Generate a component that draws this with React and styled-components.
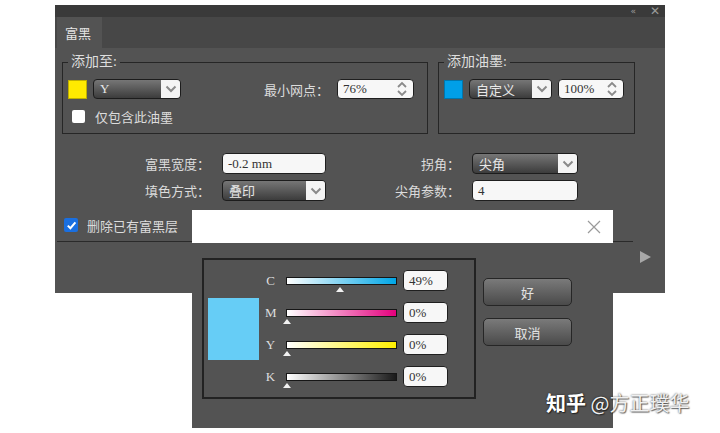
import React from 'react';
import styled, { createGlobalStyle } from 'styled-components';

const GlobalStyle = createGlobalStyle`
  body {
    margin: 0;
    background: #ffffff;
  }
`;

const UI_FONT = `"Liberation Serif", "Noto Sans CJK SC", serif`;

const Page = styled.div`
  position: relative;
  width: 720px;
  height: 433px;
  overflow: hidden;
  padding: 5px 0 0 55px;
  box-sizing: border-box;
  font-family: ${UI_FONT};
`;

const Panel = styled.div`
  width: 610px;
  height: 288px;
  background: #535353;
  display: flex;
  flex-direction: column;
`;

const TitleBar = styled.div`
  height: 12px;
  background: #3a3a3a;
  display: flex;
  justify-content: flex-end;
  align-items: center;
  gap: 14px;
  padding-right: 5px;
  color: #9a9a9a;
`;

const TitleGlyph = styled.span`
  font-family: "DejaVu Sans", sans-serif;
  font-size: ${({ size }) => size}px;
  line-height: 12px;
`;

const TabRow = styled.div`
  height: 31px;
  background: #474747;
  display: flex;
  padding-left: 2px;
`;

const Tab = styled.div`
  width: 45px;
  background: #535353;
  color: #e4e4e4;
  font-size: 13px;
  display: flex;
  align-items: center;
  padding-left: 8px;
  box-sizing: border-box;
`;

const Body = styled.div`
  flex: 1;
  display: flex;
  flex-direction: column;
  padding: 14px 0 0 7px;
`;

const GroupsRow = styled.div`
  display: flex;
  gap: 10px;
`;

const Group = styled.div`
  position: relative;
  width: ${({ width }) => width}px;
  height: 72px;
  box-sizing: border-box;
  border: 1px solid #262626;
  padding: 16px 0 0 5px;
`;

const Legend = styled.span`
  position: absolute;
  top: -9px;
  left: 5px;
  padding: 0 3px;
  background: #535353;
  color: #dedede;
  font-size: 14px;
  line-height: 16px;
`;

const Row = styled.div`
  display: flex;
  align-items: center;
  gap: ${({ gap }) => gap || 0}px;
  margin-top: ${({ top }) => top || 0}px;
`;

const Swatch = styled.div`
  width: 19px;
  height: 19px;
  box-sizing: border-box;
  border: 1px solid rgba(0, 0, 0, 0.25);
  background: ${({ color }) => color};
`;

const Select = styled.div`
  width: ${({ width }) => width}px;
  height: ${({ height }) => height || 20}px;
  box-sizing: border-box;
  border: 1px solid #1c1c1c;
  border-radius: 4px;
  background: linear-gradient(#767676, #3c3c3c);
  display: flex;
  overflow: hidden;
  margin-left: ${({ offset }) => offset || 0}px;
`;

const SelectText = styled.span`
  flex: 1;
  padding-left: 6px;
  color: #e8e8e8;
  font-size: 13px;
  display: flex;
  align-items: center;
`;

const Chevron = styled.span`
  width: 19px;
  background: #f4f4f4;
  display: flex;
  align-items: center;
  justify-content: center;
`;

const TextInput = styled.div`
  width: ${({ width }) => width}px;
  height: ${({ height }) => height || 20}px;
  box-sizing: border-box;
  border: 1px solid #1f1f1f;
  border-radius: 4px;
  background: #f7f7f7;
  display: flex;
  align-items: center;
  padding: 0 5px;
  color: #333333;
  font-size: 13px;
  margin-left: ${({ offset }) => offset || 0}px;
`;

const InputValue = styled.span`
  flex: 1;
`;

const Label = styled.span`
  color: #dcdcdc;
  font-size: 13px;
  margin-left: ${({ offset }) => offset || 0}px;
  text-align: ${({ align }) => align || 'left'};
  white-space: nowrap;
`;

const Check = styled.span`
  width: ${({ size }) => size}px;
  height: ${({ size }) => size}px;
  border-radius: 2px;
  background: ${({ checked }) => (checked ? '#1a6fe0' : '#ffffff')};
  display: flex;
  align-items: center;
  justify-content: center;
  margin-left: ${({ offset }) => offset || 0}px;
  flex-shrink: 0;
`;

const Form = styled.div`
  display: grid;
  grid-template-columns: 143px 104px 122px 106px;
  grid-auto-rows: 21px;
  column-gap: 12px;
  row-gap: 6px;
  margin: 19px 0 0 5px;
  align-items: center;
`;

const CheckRow = styled.div`
  width: 576px;
  height: 33px;
  box-sizing: border-box;
  margin: 8px 0 0 -5px;
  padding-left: 7px;
  border-bottom: 1px solid #2a2a2a;
  display: flex;
  align-items: center;
`;

const Footer = styled.div`
  flex: 1;
  display: flex;
  justify-content: flex-end;
  padding: 9px 14px 0 0;
`;

const Popup = styled.div`
  position: absolute;
  left: 192px;
  top: 210px;
  width: 421px;
  height: 218px;
  display: flex;
  flex-direction: column;
`;

const PopupHead = styled.div`
  height: 33px;
  background: #ffffff;
  display: flex;
  justify-content: flex-end;
  align-items: center;
  padding-right: 12px;
`;

const PopupBody = styled.div`
  flex: 1;
  background: #535353;
  display: flex;
  align-items: flex-start;
  gap: 7px;
  padding: 15px 0 0 10px;
`;

const ColorBox = styled.div`
  width: 274px;
  height: 141px;
  box-sizing: border-box;
  border: 2px solid #222222;
  display: flex;
  align-items: center;
  padding-left: 4px;
`;

const ColorSwatch = styled.div`
  width: 51px;
  height: 62px;
  background: #66cdf6;
`;

const Sliders = styled.div`
  display: flex;
  flex-direction: column;
  gap: 11px;
  margin-left: 6px;
`;

const SliderRow = styled.div`
  display: flex;
  align-items: center;
  height: 21px;
`;

const Channel = styled.span`
  width: 11px;
  text-align: center;
  color: #dedede;
  font-size: 13px;
`;

const Track = styled.div`
  position: relative;
  width: 111px;
  height: 8px;
  box-sizing: border-box;
  margin-left: 10px;
  border: 1px solid #161616;
  background: linear-gradient(to right, #ffffff, ${({ to }) => to});
`;

const Thumb = styled.span`
  position: absolute;
  top: 9px;
  width: 0;
  height: 0;
  margin-left: -4px;
  border-left: 4px solid transparent;
  border-right: 4px solid transparent;
  border-bottom: 5px solid #f2f2f2;
`;

const Buttons = styled.div`
  display: flex;
  flex-direction: column;
  gap: 12px;
  margin-top: 20px;
`;

const Button = styled.div`
  width: 89px;
  height: 28px;
  box-sizing: border-box;
  border: 1px solid #262626;
  border-radius: 5px;
  background: linear-gradient(#7a7a7a, #4a4a4a);
  color: #e2e2e2;
  font-size: 13px;
  display: flex;
  align-items: center;
  justify-content: center;
`;

const Watermark = styled.div`
  position: absolute;
  left: 546px;
  top: 388px;
  font-family: "Noto Sans CJK SC", sans-serif;
  font-size: 20px;
  color: #ffffff;
  text-shadow: 0 0 2px rgba(0, 0, 0, 0.7), 1px 1px 1px rgba(0, 0, 0, 0.5);
  white-space: nowrap;
`;

const Brand = styled.span`
  font-weight: bold;
`;

const Handle = styled.span`
  color: #f0f0f0;
`;

const ChevronIcon = () => (
  <svg width="12" height="8" viewBox="0 0 12 8">
    <path d="M1.5 1.5 L6 6 L10.5 1.5" fill="none" stroke="#8a8a8a" strokeWidth="2" />
  </svg>
);

const SpinIcon = () => (
  <svg width="12" height="16" viewBox="0 0 12 16">
    <path d="M2 6 L6 2 L10 6 M2 10 L6 14 L10 10" fill="none" stroke="#8a8a8a" strokeWidth="1.8" />
  </svg>
);

const CheckIcon = () => (
  <svg width="11" height="11" viewBox="0 0 11 11">
    <path d="M1.8 5.6 L4.4 8.2 L9.4 2.4" fill="none" stroke="#ffffff" strokeWidth="2" />
  </svg>
);

const CloseIcon = () => (
  <svg width="14" height="14" viewBox="0 0 14 14">
    <path d="M1 1 L13 13 M13 1 L1 13" stroke="#9a9a9a" strokeWidth="1.2" />
  </svg>
);

const PlayIcon = () => (
  <svg width="11" height="12" viewBox="0 0 11 12">
    <path d="M0 0 L11 6 L0 12 Z" fill="#a8a8a8" />
  </svg>
);

const DropDown = ({ value, width, height, offset }) => (
  <Select width={width} height={height} offset={offset}>
    <SelectText>{value}</SelectText>
    <Chevron>
      <ChevronIcon />
    </Chevron>
  </Select>
);

const channels = [
  { key: 'C', to: '#00a6e6', value: 49 },
  { key: 'M', to: '#e5007d', value: 0 },
  { key: 'Y', to: '#fff000', value: 0 },
  { key: 'K', to: '#1a1a1a', value: 0 },
];

export default function App() {
  return (
    <>
      <GlobalStyle />
      <Page>
        <Panel>
          <TitleBar>
            <TitleGlyph size={9}>«</TitleGlyph>
            <TitleGlyph size={12}>✕</TitleGlyph>
          </TitleBar>
          <TabRow>
            <Tab>富黑</Tab>
          </TabRow>
          <Body>
            <GroupsRow>
              <Group width={366}>
                <Legend>添加至:</Legend>
                <Row gap={6}>
                  <Swatch color="#ffea00" />
                  <DropDown value="Y" width={88} />
                  <Label offset={77}>最小网点：</Label>
                  <TextInput width={77} offset={2}>
                    <InputValue>76%</InputValue>
                    <SpinIcon />
                  </TextInput>
                </Row>
                <Row top={8}>
                  <Check size={13} offset={4} />
                  <Label offset={10}>仅包含此油墨</Label>
                </Row>
              </Group>
              <Group width={197}>
                <Legend>添加油墨:</Legend>
                <Row gap={6}>
                  <Swatch color="#009fe8" />
                  <DropDown value="自定义" width={83} />
                  <TextInput width={66}>
                    <InputValue>100%</InputValue>
                    <SpinIcon />
                  </TextInput>
                </Row>
              </Group>
            </GroupsRow>

            <Form>
              <Label align="right">富黑宽度：</Label>
              <TextInput width={104} height={21}>
                <InputValue>-0.2 mm</InputValue>
              </TextInput>
              <Label align="right">拐角：</Label>
              <DropDown value="尖角" width={106} height={21} />

              <Label align="right">填色方式：</Label>
              <DropDown value="叠印" width={104} height={21} />
              <Label align="right">尖角参数：</Label>
              <TextInput width={106} height={21}>
                <InputValue>4</InputValue>
              </TextInput>
            </Form>

            <CheckRow>
              <Check size={14} checked>
                <CheckIcon />
              </Check>
              <Label offset={9}>删除已有富黑层</Label>
            </CheckRow>

            <Footer>
              <PlayIcon />
            </Footer>
          </Body>
        </Panel>

        <Popup>
          <PopupHead>
            <CloseIcon />
          </PopupHead>
          <PopupBody>
            <ColorBox>
              <ColorSwatch />
              <Sliders>
                {channels.map((c) => (
                  <SliderRow key={c.key}>
                    <Channel>{c.key}</Channel>
                    <Track to={c.to}>
                      <Thumb style={{ left: `${c.value}%` }} />
                    </Track>
                    <TextInput width={45} height={21} offset={6}>
                      <InputValue>{c.value}%</InputValue>
                    </TextInput>
                  </SliderRow>
                ))}
              </Sliders>
            </ColorBox>
            <Buttons>
              <Button>好</Button>
              <Button>取消</Button>
            </Buttons>
          </PopupBody>
        </Popup>

        <Watermark>
          <Brand>知乎</Brand> <Handle>@方正璞华</Handle>
        </Watermark>
      </Page>
    </>
  );
}
